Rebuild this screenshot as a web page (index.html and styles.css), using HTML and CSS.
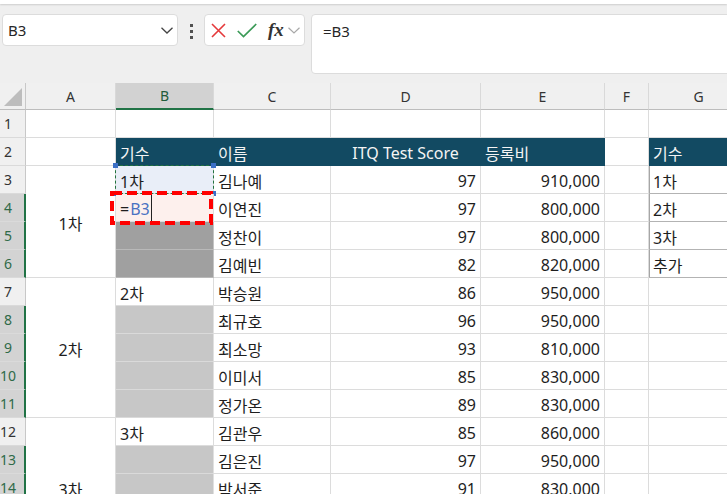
FILE: index.html
```html
<!DOCTYPE html>
<html lang="ko">
<head>
<meta charset="utf-8">
<title>Excel</title>
<link rel="stylesheet" href="styles.css">
</head>
<body>
<div class="ribbon-edge"></div>
<div class="formula-row">
  <div class="namebox">
    <span>B3</span>
    <svg class="chev" width="12" height="7" viewBox="0 0 12 7"><polyline points="0.5,0.8 6,6 11.5,0.8" fill="none" stroke="#444" stroke-width="1.3"/></svg>
  </div>
  <div class="dots"><i></i><i></i><i></i></div>
  <div class="fxbox">
    <svg class="ico-x" width="15" height="15" viewBox="0 0 15 15"><path d="M1 1 L14 14 M14 1 L1 14" stroke="#e5393b" stroke-width="1.6" fill="none"/></svg>
    <svg class="ico-ok" width="20" height="15" viewBox="0 0 20 15"><polyline points="0.8,8 6.5,13.6 19.2,1" fill="none" stroke="#3b9a57" stroke-width="1.7"/></svg>
    <span class="fx">fx</span>
    <svg class="chev-s" width="12" height="7" viewBox="0 0 12 7"><polyline points="0.5,0.8 6,6 11.5,0.8" fill="none" stroke="#a8a8a8" stroke-width="1.2"/></svg>
  </div>
  <div class="fbar">=B3</div>
</div>

<div class="sheet">
  <!-- column headers -->
  <div class="corner"><svg width="26" height="27" viewBox="0 0 26 27"><polygon points="4,23 22,5 22,23" fill="#bdbdbd"/></svg></div>
  <div class="ch">A</div>
  <div class="ch on">B</div>
  <div class="ch">C</div>
  <div class="ch">D</div>
  <div class="ch">E</div>
  <div class="ch">F</div>
  <div class="ch">G</div>

  <!-- row 1 -->
  <div class="rh">1</div>
  <div class="c"></div><div class="c"></div><div class="c"></div><div class="c"></div><div class="c"></div><div class="c"></div><div class="c"></div>

  <!-- row 2 -->
  <div class="rh">2</div>
  <div class="c"></div>
  <div class="c hd">기수</div>
  <div class="c hd">이름</div>
  <div class="c hd center">ITQ Test Score</div>
  <div class="c hd">등록비</div>
  <div class="c"></div>
  <div class="c hd">기수</div>

  <!-- row 3 -->
  <div class="rh">3</div>
  <div class="c merge m4">1차</div>
  <div class="c ref">1차<span class="hdl tl"></span><span class="hdl tr"></span><span class="hdl bl"></span><span class="hdl br"></span></div>
  <div class="c">김나예</div>
  <div class="c num">97</div>
  <div class="c num">910,000</div>
  <div class="c"></div>
  <div class="c gt">1차</div>

  <!-- row 4 -->
  <div class="rh on">4</div>
  <div class="c edit"><span class="eq">=</span><span class="refname">B3</span><span class="caret"></span>
    <svg class="mark" width="103" height="34" viewBox="0 0 103 34"><rect x="2" y="2" width="99" height="30" fill="none" stroke="#ff0000" stroke-width="4" stroke-dasharray="10 5"/></svg>
  </div>
  <div class="c">이연진</div>
  <div class="c num">97</div>
  <div class="c num">800,000</div>
  <div class="c"></div>
  <div class="c gt">2차</div>

  <!-- row 5 -->
  <div class="rh on">5</div>
  <div class="c sd"></div>
  <div class="c">정찬이</div>
  <div class="c num">97</div>
  <div class="c num">800,000</div>
  <div class="c"></div>
  <div class="c gt">3차</div>

  <!-- row 6 -->
  <div class="rh on">6</div>
  <div class="c sd"></div>
  <div class="c">김예빈</div>
  <div class="c num">82</div>
  <div class="c num">820,000</div>
  <div class="c"></div>
  <div class="c gt">추가</div>

  <!-- row 7 -->
  <div class="rh">7</div>
  <div class="c merge m5">2차</div>
  <div class="c">2차</div>
  <div class="c">박승원</div>
  <div class="c num">86</div>
  <div class="c num">950,000</div>
  <div class="c"></div>
  <div class="c"></div>

  <!-- row 8 -->
  <div class="rh on">8</div>
  <div class="c sl"></div>
  <div class="c">최규호</div>
  <div class="c num">96</div>
  <div class="c num">950,000</div>
  <div class="c"></div>
  <div class="c"></div>

  <!-- row 9 -->
  <div class="rh on">9</div>
  <div class="c sl"></div>
  <div class="c">최소망</div>
  <div class="c num">93</div>
  <div class="c num">810,000</div>
  <div class="c"></div>
  <div class="c"></div>

  <!-- row 10 -->
  <div class="rh on">10</div>
  <div class="c sl"></div>
  <div class="c">이미서</div>
  <div class="c num">85</div>
  <div class="c num">830,000</div>
  <div class="c"></div>
  <div class="c"></div>

  <!-- row 11 -->
  <div class="rh on">11</div>
  <div class="c sl"></div>
  <div class="c">정가온</div>
  <div class="c num">89</div>
  <div class="c num">830,000</div>
  <div class="c"></div>
  <div class="c"></div>

  <!-- row 12 -->
  <div class="rh">12</div>
  <div class="c merge m5">3차</div>
  <div class="c">3차</div>
  <div class="c">김관우</div>
  <div class="c num">85</div>
  <div class="c num">860,000</div>
  <div class="c"></div>
  <div class="c"></div>

  <!-- row 13 -->
  <div class="rh on">13</div>
  <div class="c sl"></div>
  <div class="c">김은진</div>
  <div class="c num">97</div>
  <div class="c num">950,000</div>
  <div class="c"></div>
  <div class="c"></div>

  <!-- row 14 -->
  <div class="rh on">14</div>
  <div class="c sl"></div>
  <div class="c">박서준</div>
  <div class="c num">91</div>
  <div class="c num">830,000</div>
  <div class="c"></div>
  <div class="c"></div>

  <!-- row 15 -->
  <div class="rh on">15</div>
  <div class="c sl"></div>
  <div class="c"></div>
  <div class="c"></div>
  <div class="c"></div>
  <div class="c"></div>
  <div class="c"></div>

  <!-- row 16 -->
  <div class="rh on">16</div>
  <div class="c sl"></div>
  <div class="c"></div>
  <div class="c"></div>
  <div class="c"></div>
  <div class="c"></div>
  <div class="c"></div>
</div>
</body>
</html>
```

FILE: styles.css
```css
html, body {
  margin: 0;
  padding: 0;
}

body {
  width: 727px;
  height: 494px;
  overflow: hidden;
  background: #efefef;
  font-family: "Noto Sans", "Noto Sans CJK KR", sans-serif;
  color: #1e1e1e;
}

.ribbon-edge {
  height: 4px;
  background: #ffffff;
  box-shadow: 0 1px 2px rgba(0, 0, 0, 0.14);
}

/* formula row */
.formula-row {
  display: flex;
  align-items: flex-start;
  height: 60px;
  padding: 10px 0 9px 2px;
}

.namebox {
  width: 176px;
  height: 32px;
  box-sizing: border-box;
  border: 1px solid #dcdcdc;
  border-radius: 4px;
  background: #fff;
  display: flex;
  align-items: center;
  justify-content: space-between;
  padding: 0 4px 0 5px;
  font-size: 15px;
  color: #262626;
}

.dots {
  width: 26px;
  display: flex;
  flex-direction: column;
  align-items: center;
  gap: 3px;
  padding-top: 10px;
}

.dots i {
  display: block;
  width: 3px;
  height: 3px;
  background: #505050;
}

.fxbox {
  width: 101px;
  height: 32px;
  box-sizing: border-box;
  border: 1px solid #dcdcdc;
  border-radius: 4px;
  background: #fff;
  display: flex;
  align-items: center;
  padding-left: 6px;
}

.ico-ok {
  margin-left: 11px;
}

.fx {
  margin-left: 11px;
  font-family: "Liberation Serif", serif;
  font-style: italic;
  font-weight: bold;
  font-size: 19px;
  color: #333;
  line-height: 1;
  margin-top: -2px;
}

.chev-s {
  margin-left: 4px;
}

.fbar {
  flex: 1;
  margin-left: 6px;
  margin-right: -10px;
  height: 60px;
  box-sizing: border-box;
  border: 1px solid #dcdcdc;
  border-radius: 4px;
  background: #fff;
  padding: 6px 11px;
  font-size: 15px;
  line-height: 20px;
  color: #262626;
}

/* sheet grid */
.sheet {
  display: grid;
  grid-template-columns: 26px 90px 98px 117px 150px 124px 44px 100px;
  grid-template-rows: 27px repeat(16, 28px);
}

.corner {
  background: #f0f0f0;
  border-right: 1px solid #c8c8c8;
  border-bottom: 1px solid #bdbdbd;
  box-sizing: border-box;
  overflow: hidden;
}

.corner svg {
  display: block;
}

.ch {
  background: #f0f0f0;
  border-right: 1px solid #d9d9d9;
  border-bottom: 1px solid #bdbdbd;
  box-sizing: border-box;
  display: flex;
  align-items: center;
  justify-content: center;
  font-size: 14px;
  color: #333;
}

.ch.on {
  background: #d2d2d2;
  border-bottom: 2px solid #217346;
  color: #1f5c3b;
}

.rh {
  background: #f0f0f0;
  border-right: 1px solid #c8c8c8;
  border-bottom: 1px solid #dadada;
  box-sizing: border-box;
  display: flex;
  align-items: center;
  justify-content: center;
  padding-right: 9px;
  font-size: 14px;
  color: #333;
}

.rh.on {
  background: #d3d3d3;
  border-right: 2px solid #217346;
  padding-right: 8px;
  color: #2f6a48;
}

.c {
  background: #fff;
  border-right: 1px solid #dcdcdc;
  border-bottom: 1px solid #dcdcdc;
  box-sizing: border-box;
  display: flex;
  align-items: center;
  padding: 3px 4px 0 4px;
  font-size: 16px;
  white-space: nowrap;
  color: #1e1e1e;
}

.num {
  justify-content: flex-end;
}

.merge,
.center {
  justify-content: center;
}

.m4 {
  grid-row: span 4;
}

.m5 {
  grid-row: span 5;
}

.hd {
  background: #124a62;
  border-color: #124a62;
  color: #f4f4f4;
}

.gt {
  border-bottom-color: #b3b3b3;
  box-shadow: inset 1px 0 0 #a6a6a6;
}

/* reference cell B3 */
.ref {
  position: relative;
  background: #e9eef8;
}

.ref::before {
  content: "";
  position: absolute;
  left: -1px;
  top: -1px;
  right: -1px;
  bottom: -1px;
  border: 1px dashed #23733f;
}

.hdl {
  position: absolute;
  width: 5px;
  height: 5px;
  background: #3b6fc6;
}

.hdl.tl { left: -3px; top: -3px; }
.hdl.tr { right: -3px; top: -3px; }
.hdl.bl { left: -3px; bottom: -3px; }
.hdl.br { right: -3px; bottom: -3px; }

/* editing cell B4 */
.edit {
  position: relative;
  background: #fdf0ed;
  padding-left: 4px;
}

.refname {
  margin-left: 1px;
  color: #4a72c2;
}

.caret {
  align-self: stretch;
  width: 1px;
  margin: -3px 0 0 1px;
  background: #222;
}

.mark {
  position: absolute;
  left: -6px;
  top: -3px;
  z-index: 3;
}

/* selected cells */
.sd {
  background: #a0a0a0;
  border-right-color: #c4c4c4;
  border-bottom-color: #b9b9b9;
}

.sl {
  background: #c7c7c7;
  border-right-color: #e0e0e0;
  border-bottom-color: #dadada;
}
```
